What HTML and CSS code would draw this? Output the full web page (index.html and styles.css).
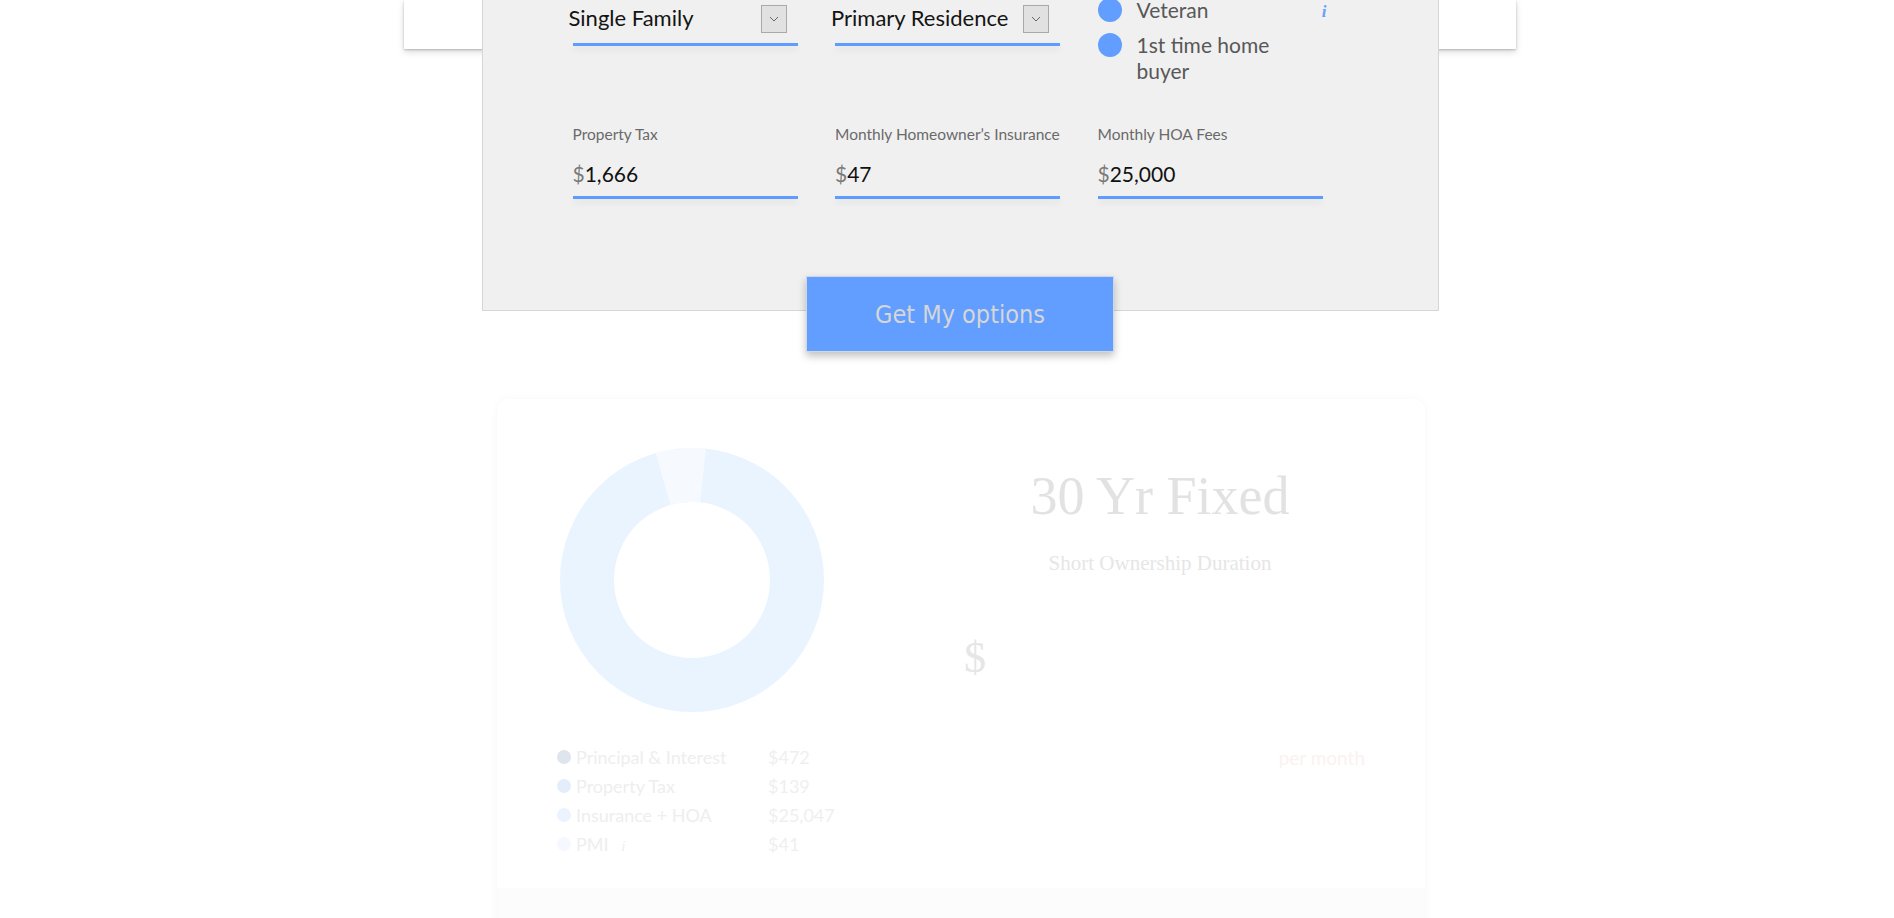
FILE: index.html
```html
<!DOCTYPE html>
<html lang="en">
<head>
<meta charset="utf-8">
<title>Mortgage options</title>
<link rel="stylesheet" href="styles.css">
</head>
<body>
<div class="page">
  <div class="topcard"></div>

  <section class="panel">
    <div class="row row-top">
      <div class="field">
        <div class="select">
          <span class="select-text">Single Family</span>
          <span class="select-btn"><svg width="10" height="6" viewBox="0 0 10 6"><polyline points="1,1 5,5 9,1" fill="none" stroke="#666" stroke-width="1"/></svg></span>
        </div>
        <div class="underline"></div>
      </div>
      <div class="field">
        <div class="select">
          <span class="select-text">Primary Residence</span>
          <span class="select-btn"><svg width="10" height="6" viewBox="0 0 10 6"><polyline points="1,1 5,5 9,1" fill="none" stroke="#666" stroke-width="1"/></svg></span>
        </div>
        <div class="underline"></div>
      </div>
      <div class="checks">
        <div class="check">
          <span class="dot"></span>
          <span class="check-text">Veteran</span>
          <span class="info">i</span>
        </div>
        <div class="check">
          <span class="dot"></span>
          <span class="check-text">1st time home<br>buyer</span>
        </div>
      </div>
    </div>

    <div class="row row-inputs">
      <div class="field">
        <div class="label">Property Tax</div>
        <div class="value"><span class="cur">$</span>1,666</div>
        <div class="underline"></div>
      </div>
      <div class="field">
        <div class="label">Monthly Homeowner’s Insurance</div>
        <div class="value"><span class="cur">$</span>47</div>
        <div class="underline"></div>
      </div>
      <div class="field">
        <div class="label">Monthly HOA Fees</div>
        <div class="value"><span class="cur">$</span>25,000</div>
        <div class="underline"></div>
      </div>
    </div>
  </section>

  <button class="cta">Get My options</button>

  <section class="result">
    <div class="result-top">
      <svg class="donut" width="264" height="264" viewBox="0 0 264 264">
        <circle cx="132" cy="132" r="105" fill="none" stroke="#eaf4ff" stroke-width="54"/>
        <path d="M95.6 5.1 A132 132 0 0 1 145.8 0.7 L140.2 54.4 A78 78 0 0 0 110.5 57.0 Z" fill="#f6faff"/>
      </svg>
      <div class="info-block">
        <div class="title">30 Yr Fixed</div>
        <div class="subtitle">Short Ownership Duration</div>
        <div class="amount">$</div>
      </div>
    </div>
    <div class="result-bottom">
      <ul class="legend">
        <li><span class="ldot c1"></span><span class="lname">Principal &amp; Interest</span><span class="lval">$472</span></li>
        <li><span class="ldot c2"></span><span class="lname">Property Tax</span><span class="lval">$139</span></li>
        <li><span class="ldot c3"></span><span class="lname">Insurance + HOA</span><span class="lval">$25,047</span></li>
        <li><span class="ldot c4"></span><span class="lname">PMI <i class="pmi-i">i</i></span><span class="lval">$41</span></li>
      </ul>
      <div class="per-month">per month</div>
    </div>
    <div class="result-foot"></div>
  </section>
</div>
</body>
</html>
```

FILE: styles.css
```css
html, body {
  margin: 0;
  padding: 0;
  background: #ffffff;
  overflow: hidden;
}

body {
  font-family: Lato, "Open Sans", sans-serif;
}

.page {
  width: 1112px;
  margin-left: 404px;
  display: flex;
  flex-direction: column;
  align-items: center;
}

.topcard {
  align-self: stretch;
  height: 49px;
  background: #ffffff;
  box-shadow: 0 1px 2px rgba(0, 0, 0, 0.22), 0 3px 7px rgba(0, 0, 0, 0.14);
}

.panel {
  position: relative;
  z-index: 1;
  box-sizing: border-box;
  width: 957px;
  margin-top: -60px;
  padding: 9px 115px 111px 90px;
  background: #f0f0f0;
  border: 1px solid #d6d6d6;
}

.row {
  display: grid;
  grid-template-columns: 225px 225px 225px;
  column-gap: 37.5px;
  align-items: start;
}

.row-inputs {
  margin-top: 43px;
}

.field {
  display: flex;
  flex-direction: column;
}

.select {
  height: 40px;
  margin-bottom: 4px;
  display: flex;
  align-items: center;
  justify-content: space-between;
  margin-left: -4px;
  margin-right: 11px;
}

.select-text {
  font-family: Lato, sans-serif;
  font-size: 22px;
  color: #141414;
  margin-top: -3px;
}

.select-btn {
  box-sizing: border-box;
  width: 26px;
  height: 28px;
  background: #e1e1e1;
  border: 1px solid #a9a9a9;
  display: flex;
  align-items: center;
  justify-content: center;
}

.underline {
  height: 3px;
  background: #5f9cff;
  box-shadow: 0 4px 6px rgba(0, 0, 0, 0.07);
}

.checks {
  display: flex;
  flex-direction: column;
  gap: 9px;
  margin-top: -1px;
}

.check {
  display: flex;
  align-items: flex-start;
  gap: 15px;
  margin-right: -4px;
}

.dot {
  flex: none;
  width: 24px;
  height: 24px;
  border-radius: 50%;
  background: #619eff;
}

.check-text {
  font-size: 21px;
  line-height: 25.5px;
  color: #585858;
  margin-top: -1px;
}

.info {
  margin-left: auto;
  margin-top: 2px;
  font-family: "Liberation Serif", serif;
  font-style: italic;
  font-weight: bold;
  font-size: 17px;
  line-height: 24px;
  color: #6b9eff;
}

.label {
  font-size: 15.5px;
  line-height: 17px;
  color: #6a6a6a;
}

.value {
  margin-top: 19px;
  font-size: 21px;
  line-height: 24px;
  color: #111111;
  margin-bottom: 10px;
}

.cur {
  color: #7a7a7a;
}

.cta {
  position: relative;
  z-index: 2;
  box-sizing: border-box;
  width: 308px;
  height: 76px;
  margin-top: -35px;
  background: #629eff;
  border: 1px solid #cfd8e6;
  box-shadow: 0 4px 8px rgba(0, 0, 0, 0.25);
  font-family: "DejaVu Sans Condensed", "DejaVu Sans", sans-serif;
  font-size: 25px;
  color: #d6d6d6;
  cursor: pointer;
  padding: 0;
}

.result {
  box-sizing: border-box;
  width: 928px;
  margin-top: 47px;
  margin-left: 2px;
  padding: 48px 60px 0 60px;
  background: #ffffff;
  border-radius: 12px;
  box-shadow: 0 0 10px rgba(0, 0, 0, 0.035);
  overflow: hidden;
}

.result-top {
  display: flex;
  align-items: flex-start;
}

.donut {
  flex: none;
  margin-left: 3px;
  margin-top: 1px;
}

.info-block {
  flex: 1;
  margin-left: 131px;
  text-align: center;
  font-family: "Liberation Serif", serif;
}

.title {
  margin-top: 22px;
  font-size: 54px;
  line-height: 54px;
  color: #e2e2e2;
}

.subtitle {
  margin-top: 30px;
  font-size: 21px;
  line-height: 21px;
  color: #e6e6e6;
}

.amount {
  margin-top: 62px;
  text-align: left;
  padding-left: 9px;
  font-size: 44px;
  line-height: 44px;
  color: #e6e6e6;
}

.result-bottom {
  display: flex;
  align-items: flex-start;
  margin-top: 30px;
}

.legend {
  list-style: none;
  margin: 0;
  padding: 0;
}

.legend li {
  display: flex;
  align-items: center;
  height: 29px;
  font-size: 18px;
  color: #eeeeee;
}

.ldot {
  flex: none;
  width: 14px;
  height: 14px;
  border-radius: 50%;
  margin-right: 5px;
}

.c1 { background: #dfe5ec; }
.c2 { background: #e4eefa; }
.c3 { background: #eaf3fe; }
.c4 { background: #f5f9ff; }

.lname {
  width: 192px;
}

.pmi-i {
  margin-left: 8px;
  font-family: "Liberation Serif", serif;
  font-size: 15px;
  color: #e8effc;
}

.lval {
  color: #efefef;
}

.per-month {
  margin-left: auto;
  margin-top: 4px;
  font-size: 19px;
  color: #fbf1f1;
}

.result-foot {
  margin: 30px -60px 0 -60px;
  height: 60px;
  background: #fcfcfc;
}
```
